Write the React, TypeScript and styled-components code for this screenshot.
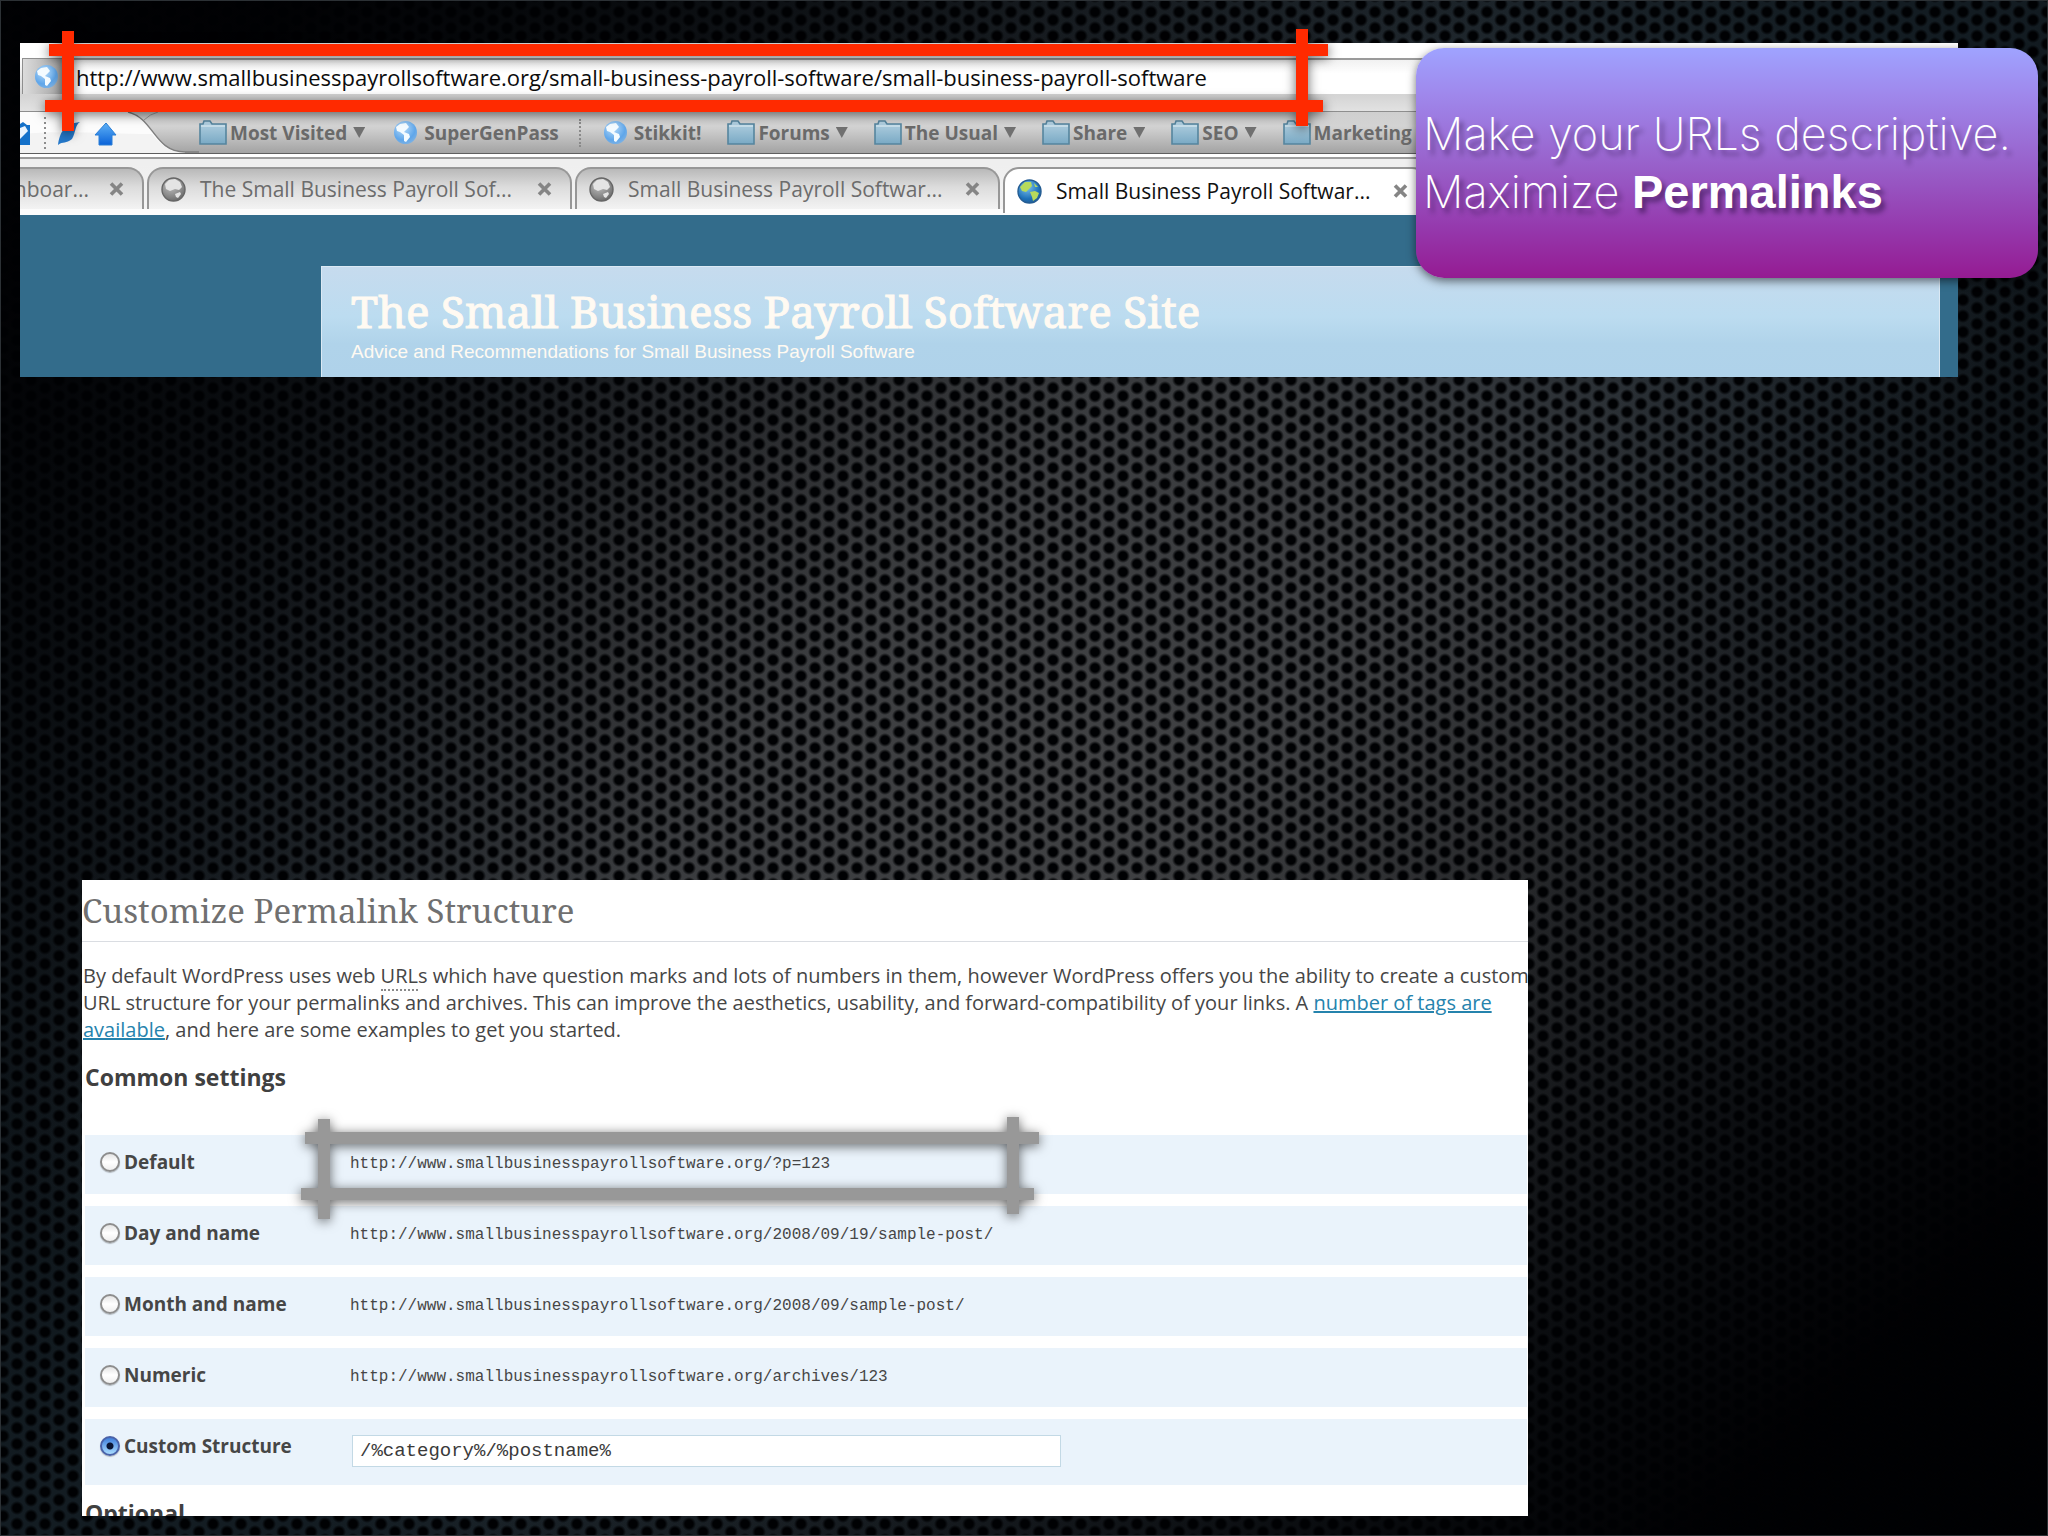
import React, { useState } from "react";
import styled, { createGlobalStyle, css } from "styled-components";

const UI = `"Open Sans", "Noto Sans", sans-serif`;
const SERIF = `"Noto Serif", "DejaVu Serif Condensed", "Liberation Serif", serif`;
const MONO = `"Liberation Mono", monospace`;

const GlobalStyle = createGlobalStyle`
  *, *::before, *::after { box-sizing: border-box; }
  body { margin: 0; background: #000; font-family: ${UI}; }
  h1, h2, h3, p, fieldset { margin: 0; padding: 0; border: 0; }
  button, input { font: inherit; color: inherit; }
`;

/* ---------- Slide ---------- */

const Slide = styled.main`
  position: relative;
  display: flex;
  flex-direction: column;
  justify-content: space-between;
  min-height: 100vh;
  padding: 43px 90px 20px 20px;
  overflow: hidden;
  box-shadow: inset 0 0 0 1px #2c3135;
  background:
    radial-gradient(circle at 14px 8px, #000103 0 4px, transparent 7px) 3px 12px / 28px 16px,
    radial-gradient(circle at 14px 8px, #000103 0 4px, transparent 7px) 17px 4px / 28px 16px,
    linear-gradient(135deg, rgba(0, 0, 2, 0.95) 8%, transparent 42%, transparent 56%, rgba(0, 0, 2, 0.98) 90%),
    radial-gradient(ellipse 1150px 1000px at 52% 50%, #414244 0%, #393b3e 40%, #242b31 70%, #131c22 100%);
`;

/* ---------- Browser capture ---------- */

const Browser = styled.section`
  position: relative;
`;

const Window = styled.div`
  overflow: hidden;
  background: #efefef;
`;

const AddressBar = styled.div`
  display: flex;
  align-items: stretch;
  height: 69px;
  padding: 15px 0 17px 2px;
  border-bottom: 1px solid #8e8e8e;
  background: linear-gradient(#ffffff 0 14px, #d4d4d4 52px, #e2e2e2);
`;

const SiteIdentity = styled.button`
  display: flex;
  align-items: center;
  width: 40px;
  padding: 0 0 0 11px;
  border: 1px solid #8f8f8f;
  border-width: 1px 0 0 1px;
  background: linear-gradient(90deg, #dcdcdc, #a5a5a5);
`;

const AddressInput = styled.input`
  flex: 1;
  min-width: 0;
  padding: 0 0 0 14px;
  border: 0;
  border-top: 2px solid #9a9a9a;
  outline: 0;
  background: linear-gradient(#f1f1f1, #ffffff 40%);
  color: #0c0c0c;
  font-size: 22px;
`;

const BookmarksBar = styled.nav`
  display: flex;
  height: 42px;
  border-bottom: 1px solid #5f5f5f;
  background: linear-gradient(#cfcfcf, #d3d3d3 35%, #a3a3a3);
`;

const NavButtons = styled.div`
  flex: none;
  width: 179px;
`;

const NavShape = styled.svg`
  display: block;
`;

const Bookmarks = styled.div`
  display: flex;
  align-items: center;
  gap: 26px;
`;

const Bookmark = styled.a<{ $site: boolean }>`
  display: flex;
  align-items: center;
  gap: ${(p) => (p.$site ? 6 : 3)}px;
  padding-left: ${(p) => (p.$site ? 2 : 0)}px;
  color: #6a6a6a;
  font-size: 19px;
  font-weight: 700;
  line-height: 26px;
  text-decoration: none;
  white-space: nowrap;
`;

const Caret = styled.span`
  width: 12px;
  height: 11px;
  margin-left: 3px;
  background: #707070;
  clip-path: polygon(0 0, 100% 0, 50% 100%);
`;

const Divider = styled.span`
  height: 28px;
  margin: 0 -6px;
  border-left: 2px dotted #8a8a8a;
`;

const TabStrip = styled.div`
  display: flex;
  gap: 3px;
  height: 61px;
  padding-top: 10px;
  border-top: 3px solid #ffffff;
  border-bottom: 6px solid #fcfcfc;
  background: linear-gradient(#9c9c9c 0 2px, #efefef 2px 8px, #f4f4f4);
`;

const Tab = styled.div<{ $active?: boolean; $cut?: boolean }>`
  display: flex;
  flex: none;
  align-items: center;
  width: 425px;
  padding: 0 18px 0 12px;
  border: 2px solid #979797;
  border-bottom: 0;
  border-radius: 16px 16px 0 0;
  background: linear-gradient(#b9b9b9, #dcdcdc 45%, #f3f3f3);
  color: #6c6c6c;
  font-size: 21px;
  white-space: nowrap;
  ${(p) =>
    p.$active &&
    css`
      margin-bottom: -4px;
      background: #ffffff;
      color: #111111;
    `}
  ${(p) =>
    p.$cut &&
    css`
      justify-content: flex-end;
      gap: 20px;
      width: 124px;
      padding-left: 0;
      border-left: 0;
      border-radius: 0 16px 0 0;
      overflow: hidden;
    `}
`;

const TabLabel = styled.span<{ $cut?: boolean }>`
  ${(p) => (p.$cut ? "flex: none;" : "flex: 1; margin-left: 14px;")}
`;

const TabClose = styled.button`
  display: flex;
  flex: none;
  padding: 0;
  border: 0;
  background: none;
`;

const Page = styled.div`
  padding: 51px 18px 0 301px;
  background: #336c8b;
`;

const SiteHeader = styled.header`
  padding: 15px 0 13px 29px;
  border: 1px solid #dbe9f4;
  border-width: 1px 1px 0 1px;
  background: linear-gradient(#c6dbee, #bcdcf0 45%, #b0d3ea 70%, #afd2ea);
  color: #fffaf2;
`;

const SiteTitle = styled.h1`
  font: 400 44px/58px ${SERIF};
  white-space: nowrap;
  -webkit-text-stroke: 1px #fffaf2;
`;

const Tagline = styled.p`
  font: 400 19px/24px "Liberation Sans", sans-serif;
  white-space: nowrap;
`;

/* ---------- Annotations ---------- */

const Frame = styled.svg<{ $left: number; $top: number }>`
  position: absolute;
  left: ${(p) => p.$left}px;
  top: ${(p) => p.$top}px;
  overflow: visible;
  filter: drop-shadow(0 2px 6px rgba(0, 0, 0, 0.6));
  pointer-events: none;
`;

const Callout = styled.aside`
  position: absolute;
  top: 48px;
  right: 10px;
  display: flex;
  flex-direction: column;
  justify-content: center;
  width: 622px;
  height: 230px;
  padding: 0 7px;
  border-radius: 28px;
  background: linear-gradient(#9fa3ff, #9f88ec 20%, #985fc9 52%, #9539ad 78%, #951b92);
  box-shadow: 0 3px 10px rgba(0, 0, 0, 0.55);
  color: #ffffff;
  font: 250 45px/58px Inter, "Liberation Sans", sans-serif;
  text-shadow: 4px 5px 5px rgba(20, 0, 40, 0.45);
  white-space: nowrap;
`;

const Strong = styled.strong`
  font: 700 47px/58px "Liberation Sans", sans-serif;
`;

/* ---------- Permalink settings ---------- */

const Settings = styled.section`
  position: relative;
  width: 100%;
  max-width: 1446px;
  margin-left: 62px;
`;

const SettingsSheet = styled.form`
  height: 636px;
  overflow: hidden;
  background: #ffffff;
  color: #464646;
`;

const SheetTitle = styled.h2`
  padding-top: 1px;
  border-bottom: 1px solid #dadde2;
  color: #707070;
  font: 400 33px/60px ${SERIF};
  white-space: nowrap;
`;

const Intro = styled.p`
  padding: 20px 0 0 1px;
  font-size: 20px;
  line-height: 27px;
  white-space: nowrap;
`;

const Abbr = styled.abbr`
  border-bottom: 2px dotted #8a8a8a;
  text-decoration: none;
`;

const Link = styled.a`
  color: #2583ad;
`;

const GroupTitle = styled.h3`
  padding-left: 3px;
  color: #404040;
  font-size: 23px;
  font-weight: 700;
  line-height: 32px;
`;

const Options = styled.fieldset`
  display: flex;
  flex-direction: column;
  gap: 12px;
  padding: 42px 1px 12px 3px;
`;

const Group = styled.div`
  padding-top: 18px;
`;

const Option = styled.div<{ $tall?: boolean }>`
  display: grid;
  grid-template-columns: 265px 1fr;
  align-items: start;
  height: ${(p) => (p.$tall ? 66 : 59)}px;
  padding-top: 13px;
  background: #eaf3fb;
`;

const OptionLabel = styled.label`
  display: flex;
  align-items: center;
  gap: 4px;
  padding-left: 15px;
  font-size: 19px;
  font-weight: 700;
  line-height: 28px;
`;

const Radio = styled.input`
  appearance: none;
  width: 20px;
  height: 20px;
  margin: 0;
  border: 2px solid #8d8d8d;
  border-radius: 50%;
  background: linear-gradient(#e4e4e4, #ffffff 50%, #efefef);
  box-shadow: 0 1px 1px rgba(0, 0, 0, 0.25);
  &:checked {
    border-color: #4a62a8;
    background:
      radial-gradient(circle, #0a1533 0 3px, transparent 4px),
      linear-gradient(#3f7fdc, #a9dcff);
  }
`;

const Sample = styled.code`
  font: 400 16px/32px ${MONO};
`;

const StructureInput = styled.input`
  width: 709px;
  height: 32px;
  margin: 3px 0 0 2px;
  padding: 0 7px;
  border: 1px solid #c3d9e5;
  outline: 0;
  background: #ffffff;
  color: #3a3a3a;
  font: 400 19px/28px ${MONO};
`;

/* ---------- Drawings ---------- */

const HashFrame = ({ width, color, left, top }: { width: number; color: string; left: number; top: number }) => (
  <Frame width={width} height="102" $left={left} $top={top} fill={color} aria-hidden="true">
    <rect x="4" y="15" width={width - 4} height="12" />
    <rect x="0" y="71" width={width - 5} height="12" />
    <rect x="17" y="2" width="12" height="100" />
    <rect x={width - 32} y="0" width="12" height="97" />
  </Frame>
);

type GlobeTone = "sky" | "grey" | "earth";
const TONES: Record<GlobeTone, { hi: string; sea: string; rim: string; land: string }> = {
  sky: { hi: "#b9dcf8", sea: "#5fa6ea", rim: "#7fb2e2", land: "#f4fbff" },
  grey: { hi: "#c4c4c4", sea: "#858585", rim: "#666666", land: "#e4e4e4" },
  earth: { hi: "#7fc4ee", sea: "#1d70b8", rim: "#245c92", land: "#b6da5c" },
};

const Globe = ({ tone, id }: { tone: GlobeTone; id: string }) => {
  const t = TONES[tone];
  return (
    <svg width="25" height="25" viewBox="0 0 25 25" aria-hidden="true">
      <defs>
        <radialGradient id={id} cx="0.4" cy="0.3" r="0.75">
          <stop offset="0" stopColor={t.hi} />
          <stop offset="0.7" stopColor={t.sea} />
          <stop offset="1" stopColor={t.rim} />
        </radialGradient>
      </defs>
      <circle cx="12.5" cy="12.5" r="11.5" fill={`url(#${id})`} stroke={t.rim} strokeWidth={tone === "sky" ? 0 : 1.4} />
      {tone === "sky" && <path d="M3 7 L7 4 L13 3 L16 7 L13 10 L11 12 L16 14 L17 17 L13 22 L11 21 L11 15 L7 12 L4 11Z" fill={t.land} />}
      {tone === "grey" && <path d="M4 7 L8 3 L14 2 L19 5 L21 10 L18 13 L14 12 L9 14 L5 12Z M14 17 L19 15 L20 17 L17 21 L15 20Z" fill={t.land} />}
      {tone === "earth" && <path d="M3 8 L8 3 L14 3 L15 7 L12 10 L9 13 L5 12Z M13 13 L18 12 L22 14 L20 19 L16 22 L15 18Z M17 4 L21 8 L18 8Z" fill={t.land} />}
    </svg>
  );
};

const Folder = () => (
  <svg width="28" height="25" viewBox="0 0 28 25" aria-hidden="true">
    <defs>
      <linearGradient id="folder" x1="0" y1="0" x2="0" y2="1">
        <stop offset="0" stopColor="#b5d2e2" />
        <stop offset="1" stopColor="#79a9c4" />
      </linearGradient>
    </defs>
    <path d="M1 4 L4 4 L5 1 H11 L13 4 H27 V24 H1Z" fill="url(#folder)" stroke="#55859e" strokeWidth="1.6" />
    <path d="M2 6 H26" stroke="#d3e5ee" strokeWidth="1.4" />
  </svg>
);

const CloseMark = () => (
  <svg width="15" height="14" viewBox="0 0 15 14" aria-hidden="true">
    <path d="M2 1.5 L13 12.5 M13 1.5 L2 12.5" stroke="#858585" strokeWidth="3.6" />
  </svg>
);

const NavCorner = () => (
  <NavShape width="179" height="41" viewBox="0 0 179 41" aria-hidden="true">
    <defs>
      <linearGradient id="arrow" x1="0" y1="0" x2="0" y2="1">
        <stop offset="0" stopColor="#5fb2f7" />
        <stop offset="1" stopColor="#0a62d8" />
      </linearGradient>
    </defs>
    <path d="M0 0 H108 C134 6 134 40 165 40 V41 H0Z" fill="#fcfcfc" />
    <path d="M0 22 C40 18 90 22 132 22 C140 32 148 40 165 41 H0Z" fill="#f3f3f3" />
    <path d="M108 0 C134 6 134 40 165 40 H179" fill="none" stroke="#7f7f7f" strokeWidth="1.4" />
    <path d="M124 8 Q130 2 138 0" fill="none" stroke="#9a9a9a" />
    <path d="M0 12 L3 10 L7 13 H10 V33 H0Z" fill="#1471c9" />
    <path d="M0 16 L5 14 L8 19 L0 27Z" fill="#eaf4fd" />
    <path d="M25 5 V38" stroke="#8d8d8d" strokeWidth="2" strokeDasharray="2 3" />
    <path d="M38 33 C40 20 44 12 60 10 C55 13 56 20 52 27 C46 32 43 29 38 33Z" fill="#2579cb" />
    <path d="M86 11 L96 23 H92 V33 H79 V23 H75Z" fill="url(#arrow)" stroke="#2a7fd6" />
  </NavShape>
);

/* ---------- Data ---------- */

const BOOKMARKS: { label: string; kind: "folder" | "site"; dividerAfter?: boolean }[] = [
  { label: "Most Visited", kind: "folder" },
  { label: "SuperGenPass", kind: "site", dividerAfter: true },
  { label: "Stikkit!", kind: "site" },
  { label: "Forums", kind: "folder" },
  { label: "The Usual", kind: "folder" },
  { label: "Share", kind: "folder" },
  { label: "SEO", kind: "folder" },
  { label: "Marketing", kind: "folder" },
];

const SITE = "http://www.smallbusinesspayrollsoftware.org";

const STRUCTURES = [
  { id: "default", label: "Default", sample: `${SITE}/?p=123` },
  { id: "day", label: "Day and name", sample: `${SITE}/2008/09/19/sample-post/` },
  { id: "month", label: "Month and name", sample: `${SITE}/2008/09/sample-post/` },
  { id: "numeric", label: "Numeric", sample: `${SITE}/archives/123` },
];

const Close = () => (
  <TabClose type="button" aria-label="Close tab">
    <CloseMark />
  </TabClose>
);

export default function App() {
  const [structure, setStructure] = useState("custom");
  return (
    <>
      <GlobalStyle />
      <Slide>
        <Browser>
          <Window>
            <AddressBar>
              <SiteIdentity type="button" aria-label="Site identity">
                <Globe tone="sky" id="globe-address" />
              </SiteIdentity>
              <AddressInput
                aria-label="Address"
                defaultValue={`${SITE}/small-business-payroll-software/small-business-payroll-software`}
              />
            </AddressBar>
            <BookmarksBar>
              <NavButtons>
                <NavCorner />
              </NavButtons>
              <Bookmarks>
                {BOOKMARKS.map((b) => (
                  <React.Fragment key={b.label}>
                    <Bookmark href="#" $site={b.kind === "site"}>
                      {b.kind === "folder" ? <Folder /> : <Globe tone="sky" id={`globe-${b.label.length}`} />}
                      {b.label}
                      {b.kind === "folder" && <Caret />}
                    </Bookmark>
                    {b.dividerAfter && <Divider />}
                  </React.Fragment>
                ))}
              </Bookmarks>
            </BookmarksBar>
            <TabStrip>
              <Tab $cut>
                <TabLabel $cut>hboar...</TabLabel>
                <Close />
              </Tab>
              <Tab>
                <Globe tone="grey" id="globe-tab-1" />
                <TabLabel>The Small Business Payroll Sof...</TabLabel>
                <Close />
              </Tab>
              <Tab>
                <Globe tone="grey" id="globe-tab-2" />
                <TabLabel>Small Business Payroll Softwar...</TabLabel>
                <Close />
              </Tab>
              <Tab $active>
                <Globe tone="earth" id="globe-tab-3" />
                <TabLabel>Small Business Payroll Softwar...</TabLabel>
                <Close />
              </Tab>
            </TabStrip>
            <Page>
              <SiteHeader>
                <SiteTitle>The Small Business Payroll Software Site</SiteTitle>
                <Tagline>Advice and Recommendations for Small Business Payroll Software</Tagline>
              </SiteHeader>
            </Page>
          </Window>
          <HashFrame width={1283} color="#ff2a00" left={25} top={-14} />
        </Browser>

        <Settings>
          <SettingsSheet>
            <SheetTitle>Customize Permalink Structure</SheetTitle>
            <Intro>
              By default WordPress uses web <Abbr title="Universal Resource Locator">URL</Abbr>s which have question
              marks and lots of numbers in them, however WordPress offers you the ability to create a custom
              <br />
              URL structure for your permalinks and archives. This can improve the aesthetics, usability, and
              forward-compatibility of your links. A{" "}
              <Link href="#">
                number of tags are
                <br />
                available
              </Link>
              , and here are some examples to get you started.
            </Intro>
            <Group>
              <GroupTitle>Common settings</GroupTitle>
              <Options aria-label="Common settings">
                {STRUCTURES.map((s) => (
                  <Option key={s.id}>
                    <OptionLabel>
                      <Radio
                        type="radio"
                        name="structure"
                        checked={structure === s.id}
                        onChange={() => setStructure(s.id)}
                      />
                      {s.label}
                    </OptionLabel>
                    <Sample>{s.sample}</Sample>
                  </Option>
                ))}
                <Option $tall>
                  <OptionLabel>
                    <Radio
                      type="radio"
                      name="structure"
                      checked={structure === "custom"}
                      onChange={() => setStructure("custom")}
                    />
                    Custom Structure
                  </OptionLabel>
                  <StructureInput aria-label="Custom structure" defaultValue="/%category%/%postname%" />
                </Option>
              </Options>
            </Group>
            <GroupTitle>Optional</GroupTitle>
          </SettingsSheet>
          <HashFrame width={738} color="#989898" left={219} top={237} />
        </Settings>

        <Callout>
          <span>Make your URLs descriptive.</span>
          <span>
            Maximize <Strong>Permalinks</Strong>
          </span>
        </Callout>
      </Slide>
    </>
  );
}
